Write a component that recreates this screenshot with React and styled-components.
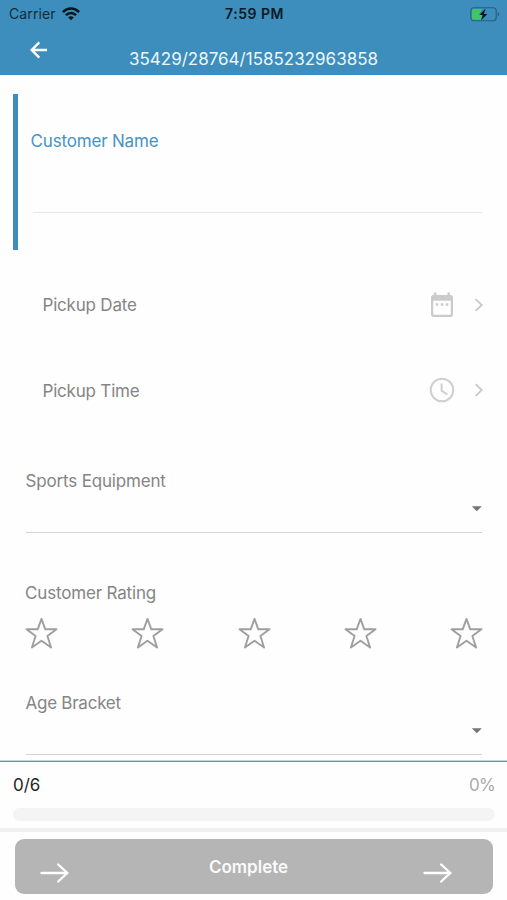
import React from 'react';
import styled, { createGlobalStyle } from 'styled-components';

const GlobalStyle = createGlobalStyle`
  * { box-sizing: border-box; }
  body { margin: 0; background: #fefefe; font-family: Inter, "Liberation Sans", sans-serif; }
`;

const Screen = styled.div`
  width: 507px;
  height: 900px;
  overflow: hidden;
  display: flex;
  flex-direction: column;
  background: #fefefe;
`;

const Label = styled.span`
  font-size: ${(p) => p.$size || 17}px;
  font-weight: ${(p) => p.$weight || 400};
  letter-spacing: ${(p) => p.$track ?? -0.17}px;
  line-height: 20px;
  white-space: nowrap;
  color: ${(p) => p.$color || '#858585'};
`;

const Header = styled.header`
  height: 75px;
  flex: none;
  background: #3d8ebd;
`;

const StatusBar = styled.div`
  height: 28px;
  display: grid;
  grid-template-columns: 1fr auto 1fr;
  align-items: center;
  padding: 0 7px 0 9px;
`;

const Carrier = styled.div`
  display: flex;
  align-items: center;
  gap: 6px;
`;

const BatteryIcon = styled.svg`
  justify-self: end;
`;

const NavBar = styled.div`
  height: 47px;
  display: grid;
  grid-template-columns: 99px 1fr 99px;
  padding: 0 15px;
`;

const BackButton = styled.button`
  width: 48px;
  height: 43px;
  padding: 0;
  border: 0;
  background: none;
  display: flex;
  align-items: center;
  justify-content: center;
`;

const NavTitle = styled.div`
  padding-top: 21px;
  display: flex;
  justify-content: center;
`;

const Form = styled.main`
  height: 686px;
  flex: none;
  padding-top: 19px;
  overflow: hidden;
`;

const NameField = styled.section`
  height: 156px;
  margin: 0 25px 0 13px;
  padding: 37px 0 0 12.5px;
  border-left: 5px solid #3d8ebd;
`;

const NameInput = styled.div`
  height: 62px;
  margin-left: 2.5px;
  border-bottom: 1px solid #e7e7e7;
`;

const PickerList = styled.div`
  padding: 12px 23px 0 42.5px;
`;

const PickerRow = styled.div`
  height: ${(p) => p.$height}px;
  display: flex;
  align-items: center;
`;

const RowLabel = styled(Label)`
  margin-top: ${(p) => p.$top || 0}px;
`;

const PickerIcons = styled.div`
  margin-left: auto;
  display: flex;
  align-items: center;
  gap: 19px;
`;

const SelectField = styled.section`
  height: 62px;
  margin: ${(p) => p.$top}px 25px 0 25.5px;
  border-bottom: 1px solid #d4d4d4;
  display: flex;
  flex-direction: column;
`;

const Caret = styled.svg`
  align-self: flex-end;
  margin-top: 15px;
`;

const RatingField = styled.section`
  margin: 50px 24px 0 25px;
  display: flex;
  flex-direction: column;
`;

const Stars = styled.div`
  display: flex;
  justify-content: space-between;
  margin-top: 14px;
`;

const ProgressPanel = styled.section`
  height: 71px;
  flex: none;
  padding: 13px 12px 0 13px;
  border-top: 1px solid #5297c6;
  box-shadow: 0 -1px 0 #b8d8e9;
  border-bottom: 4px solid #f0f0f0;
  z-index: 1;
`;

const ProgressLabels = styled.div`
  height: 33px;
  display: flex;
  justify-content: space-between;
`;

const Track = styled.div`
  height: 13px;
  border-radius: 7px;
  background: #f4f4f4;
`;

const CompleteButton = styled.button`
  height: 55px;
  margin: 7px 14px 0 15px;
  padding: 0 41px 0 25px;
  border: 0;
  border-radius: 9px;
  background: #b5b5b5;
  display: grid;
  grid-template-columns: 29px 1fr 29px;
  align-items: start;
  font-family: inherit;
`;

const ArrowSlot = styled.span`
  padding-top: 24px;
  line-height: 0;
`;

const ButtonText = styled.span`
  padding: 18px 0 0 5px;
  display: flex;
  justify-content: center;
`;

const Wifi = () => (
  <svg width="18" height="14" viewBox="0 0 18 14" fill="none" stroke="#07151d" strokeWidth="2.5">
    <path d="M.9 5.1C5.5.4 12.5.4 17.1 5.1" />
    <path d="M3.9 8.2c2.9-3 7.3-3 10.2 0" />
    <path d="M6.2 10.5c1.6-1.6 4-1.6 5.6 0L9 13.3z" fill="#07151d" stroke="none" />
  </svg>
);

const Battery = () => (
  <BatteryIcon width="30" height="15" viewBox="0 0 30 15">
    <rect x=".8" y=".8" width="25.4" height="13" rx="3" fill="none" stroke="#285f7d" strokeWidth="1.1" />
    <path d="M3.5 2h8.3L9 8h2.8l-1 4.7H3.5A1.5 1.5 0 0 1 2 11.2V3.5A1.5 1.5 0 0 1 3.5 2z" fill="#3dc863" />
    <path d="M15.6 1.5 9.3 8h3.5l-1.7 5.2L17.3 7h-3.5z" fill="#06141c" />
    <path d="M27.7 5.3v4c2.1-.8 2.1-3.2 0-4z" fill="#285f7d" />
  </BatteryIcon>
);

const BackArrow = () => (
  <svg width="18" height="18" viewBox="0 0 18 18" fill="none" stroke="#fff" strokeWidth="2.4">
    <path d="M17 9H2M9.3 1.3 1.7 9l7.6 7.7" />
  </svg>
);

const Calendar = () => (
  <svg width="25" height="26" viewBox="0 0 25 26">
    <path d="M4 .5h2.500V3h11V.5H20V3h.5A2.500 2.500 0 0 1 23 5.500V22.500a2.500 2.500 0 0 1-2.500 2.500h-17A2.500 2.500 0 0 1 1 22.500V5.500A2.500 2.500 0 0 1 3.500 3H4zM3.200 8.800v14h17.600v-14z" fill="#cbcbcb" fillRule="evenodd" />
    <path d="M5.800 11.300h2.500v2.400H5.800zm5 0h2.500v2.400h-2.500zm5 0h2.500v2.400h-2.500z" fill="#cbcbcb" />
  </svg>
);

const Clock = () => (
  <svg width="26" height="26" viewBox="0 0 26 26" fill="none" stroke="#cfcfcf" strokeWidth="2">
    <circle cx="13" cy="13" r="11.300" />
    <path d="M12.600 6.500v7.200l5.700 3.800" />
  </svg>
);

const Chevron = () => (
  <svg width="10" height="14" viewBox="0 0 10 14" fill="none" stroke="#c9c9c9" strokeWidth="1.800">
    <path d="m1.600 1.200 6.200 5.800-6.200 5.800" />
  </svg>
);

const SelectCaret = () => (
  <Caret width="11" height="6" viewBox="0 0 11 6">
    <path d="M.8.3h10L5.800 5.200z" fill="#757575" />
  </Caret>
);

const Star = () => (
  <svg width="33" height="32" viewBox="0 0 33 32" fill="none" stroke="#9f9f9f" strokeWidth="1.900" strokeLinejoin="round">
    <path d="m16.500 1.900 3.800 10.400h11.200l-9.100 6.700 3.700 11.500-9.600-6.700-9.600 6.700 3.700-11.500-9.100-6.700h11.200z" />
  </svg>
);

const ForwardArrow = () => (
  <svg width="29" height="20" viewBox="0 0 29 20" fill="none" stroke="#fff" strokeWidth="2.300" strokeLinecap="round">
    <path d="M1.500 10h25.800M18.200 1.500l9.100 8.500-9.100 8.500" />
  </svg>
);

export default function App() {
  return (
    <>
      <GlobalStyle />
      <Screen>
        <Header>
          <StatusBar>
            <Carrier>
              <Label $size={14} $track={0.1} $color="#102c3b">Carrier</Label>
              <Wifi />
            </Carrier>
            <Label $size={14} $track={0.5} $weight={600} $color="#071a25">7:59 PM</Label>
            <Battery />
          </StatusBar>
          <NavBar>
            <BackButton aria-label="Back"><BackArrow /></BackButton>
            <NavTitle>
              <Label $track={0} $color="#eef7fc">35429/28764/1585232963858</Label>
            </NavTitle>
          </NavBar>
        </Header>
        <Form>
          <NameField>
            <Label $color="#4794c2">Customer Name</Label>
            <NameInput />
          </NameField>
          <PickerList>
            <PickerRow $height={86}>
              <RowLabel $track={-0.2}>Pickup Date</RowLabel>
              <PickerIcons><Calendar /><Chevron /></PickerIcons>
            </PickerRow>
            <PickerRow $height={84}>
              <RowLabel $top={2} $track={-0.2}>Pickup Time</RowLabel>
              <PickerIcons><Clock /><Chevron /></PickerIcons>
            </PickerRow>
          </PickerList>
          <SelectField $top={39}>
            <Label>Sports Equipment</Label>
            <SelectCaret />
          </SelectField>
          <RatingField>
            <Label>Customer Rating</Label>
            <Stars>
              {[1, 2, 3, 4, 5].map((n) => <Star key={n} />)}
            </Stars>
          </RatingField>
          <SelectField $top={44}>
            <Label $track={-0.25}>Age Bracket</Label>
            <SelectCaret />
          </SelectField>
        </Form>
        <ProgressPanel>
          <ProgressLabels>
            <Label $track={0} $color="#252525">0/6</Label>
            <Label $track={-0.7} $color="#aaa">0%</Label>
          </ProgressLabels>
          <Track />
        </ProgressPanel>
        <CompleteButton>
          <ArrowSlot><ForwardArrow /></ArrowSlot>
          <ButtonText><Label $weight={600} $color="#fafafa" $track={0}>Complete</Label></ButtonText>
          <ArrowSlot><ForwardArrow /></ArrowSlot>
        </CompleteButton>
      </Screen>
    </>
  );
}
